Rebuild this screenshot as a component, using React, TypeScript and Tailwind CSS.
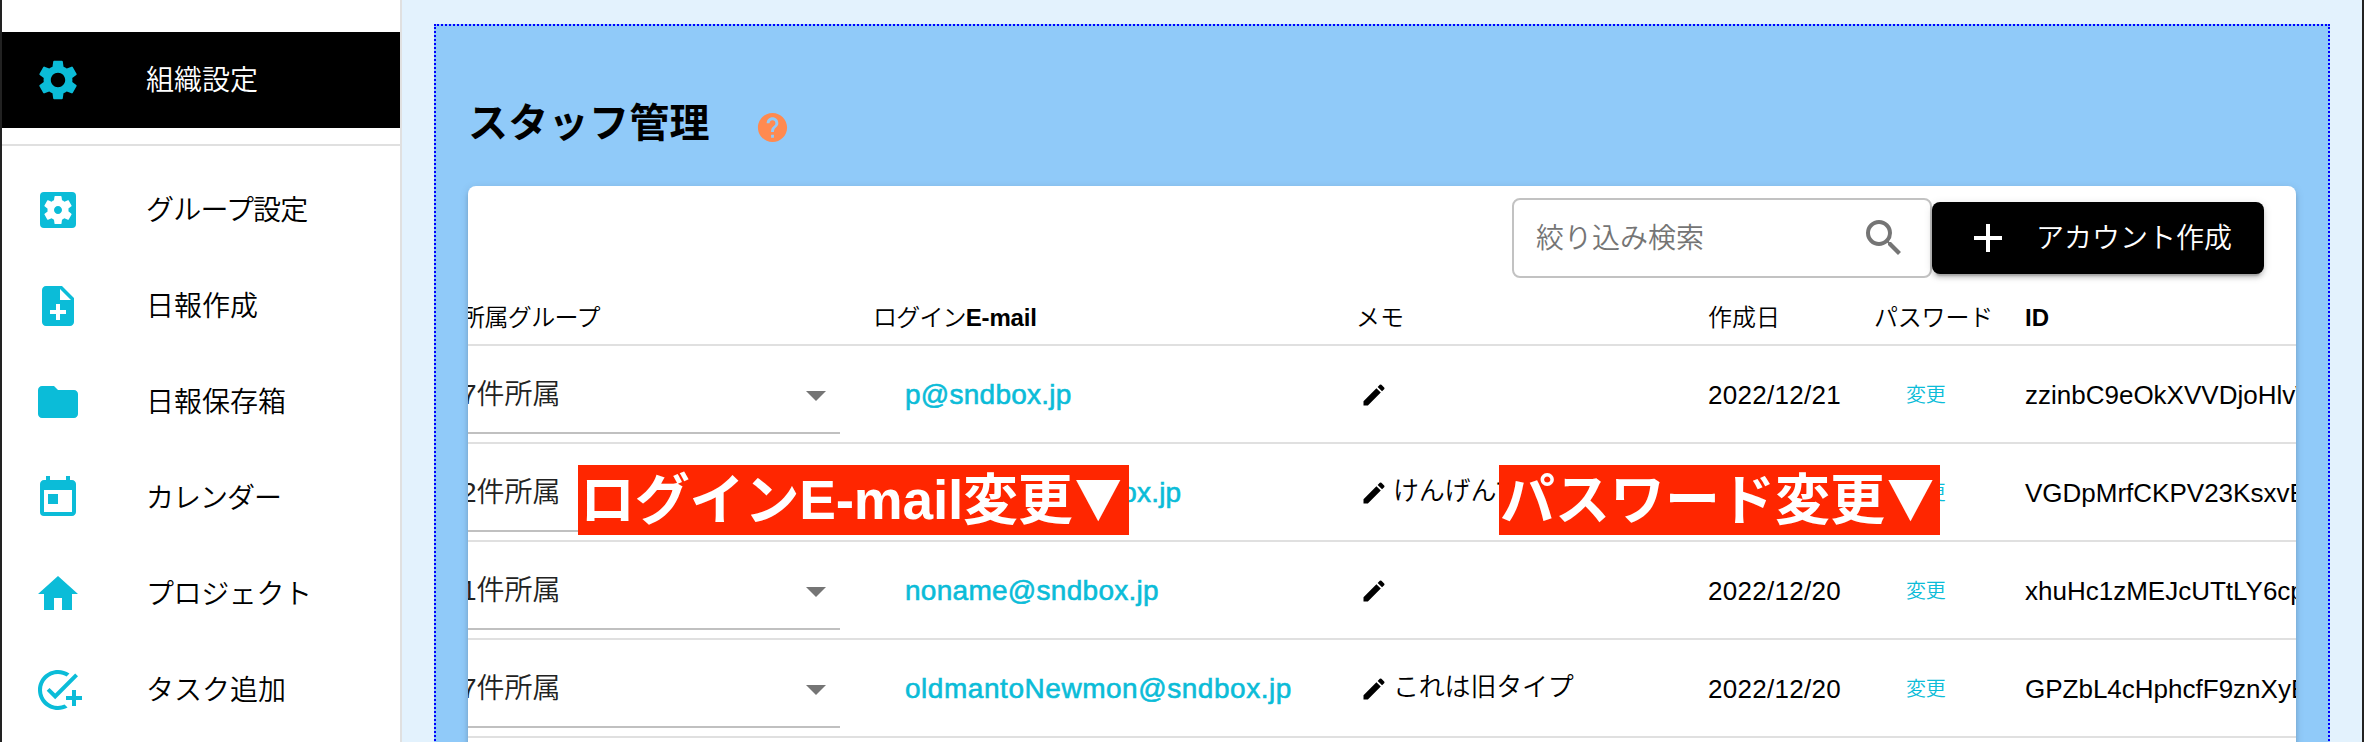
import type { ReactNode } from 'react';
import type { IconType } from 'react-icons';
import {
  MdAdd,
  MdAddTask,
  MdArrowDropDown,
  MdEdit,
  MdFolder,
  MdHelp,
  MdHome,
  MdNoteAdd,
  MdSearch,
  MdSettings,
  MdSettingsApplications,
  MdToday,
} from 'react-icons/md';

const menu: { label: string; icon: IconType; text: string }[] = [
  { label: 'グループ設定', icon: MdSettingsApplications, text: 'tracking-[-0.8px]' },
  { label: '日報作成', icon: MdNoteAdd, text: '' },
  { label: '日報保存箱', icon: MdFolder, text: '' },
  { label: 'カレンダー', icon: MdToday, text: 'tracking-[-1px]' },
  { label: 'プロジェクト', icon: MdHome, text: 'tracking-[-0.4px]' },
  { label: 'タスク追加', icon: MdAddTask, text: '' },
];

const staff = [
  { groups: 7, email: 'p@sndbox.jp', spacing: 'tracking-[0.25px]', memo: '', date: '2022/12/21', id: 'zzinbC9eOkXVVDjoHlvW' },
  { groups: 2, email: 'managers@sndbox.jp', spacing: 'tracking-[0.2px]', memo: 'けんげんてすと', date: '2022/12/20', id: 'VGDpMrfCKPV23KsxvEq' },
  { groups: 1, email: 'noname@sndbox.jp', spacing: 'tracking-[0.28px]', memo: '', date: '2022/12/20', id: 'xhuHc1zMEJcUTtLY6cpa' },
  { groups: 7, email: 'oldmantoNewmon@sndbox.jp', spacing: 'tracking-[0.54px]', memo: 'これは旧タイプ', date: '2022/12/20', id: 'GPZbL4cHphcfF9znXyEa' },
];

const columns = 'grid grid-cols-[412px_483px_352px_166px_151px_400px]';

function Callout({ children, className }: { children: ReactNode; className: string }) {
  return (
    <div
      className={`absolute top-[465px] flex h-[70px] items-center overflow-hidden bg-[#ff2600] text-[55px] leading-none font-bold whitespace-nowrap text-white ${className}`}
    >
      <span>{children}</span>
      <span className="mb-[10px] -ml-[2px] flex w-[55px] shrink-0 scale-y-[1.08] justify-center font-['Noto_Sans_CJK_JP',sans-serif] text-[47px]">
        ▼
      </span>
    </div>
  );
}

function Sidebar() {
  return (
    <nav className="box-content w-[398px] shrink-0 border-r-2 border-[#e0e0e0] bg-white pt-8 text-[28px]">
      <div className="flex h-24 items-center bg-black pl-8 text-white">
        <MdSettings className="size-12 text-[#0bbcd8]" />
        <span className="mt-px ml-16 font-[350]">組織設定</span>
      </div>
      <div className="mt-4 mb-4 h-0.5 bg-[#e0e0e0]" />
      {menu.map(({ label, icon: Icon, text }) => (
        <div key={label} className="flex h-24 items-center pl-8">
          <Icon className="size-12 text-[#0bbcd8]" />
          <span className={`mt-px ml-16 font-[350] whitespace-nowrap ${text}`}>{label}</span>
        </div>
      ))}
    </nav>
  );
}

function Toolbar() {
  return (
    <div className="flex h-[104px] items-start justify-end pt-3 pr-8">
      <div className="flex h-20 w-[420px] items-center justify-between rounded-lg border-2 border-[#c2c2c2] pr-[22px] pl-[22px]">
        <span className="mt-px text-[28px] font-[350] text-[#757575]">絞り込み検索</span>
        <MdSearch className="size-12 text-[#757575]" />
      </div>
      <button className="mt-1 flex h-[72px] w-[332px] items-center rounded-lg bg-black pl-8 text-[28px] text-white shadow-[0_6px_2px_-4px_rgba(0,0,0,0.2),0_4px_4px_rgba(0,0,0,0.14),0_2px_10px_rgba(0,0,0,0.12)]">
        <MdAdd className="size-12" />
        <span className="mt-px ml-6 font-[350] whitespace-nowrap">アカウント作成</span>
      </button>
    </div>
  );
}

function StaffTable() {
  return (
    <div className="-ml-[7px] w-[1964px]">
      <div className={`${columns} h-[56px] items-center border-b-2 border-[#e0e0e0] pt-px text-[24px] font-[350] whitespace-nowrap`}>
        <span className="tracking-[-0.6px]">所属グループ</span>
        <span className="tracking-[-0.8px]">
          ログイン<span className="font-bold tracking-[-0.2px]">E-mail</span>
        </span>
        <span>メモ</span>
        <span>作成日</span>
        <span className="tracking-[-0.2px]">パスワード</span>
        <span className="font-bold">ID</span>
      </div>
      {staff.map((s) => (
        <div key={s.id} className={`${columns} h-[98px] items-center border-b-2 border-[#e0e0e0] text-[26px] whitespace-nowrap`}>
          <div className="mr-[33px] flex h-[88px] items-center justify-between self-start border-b-2 border-[#c0c0c0] pt-[12px] text-[28px] text-[#222]">
            <span className="font-[350]">{s.groups}件所属</span>
            <MdArrowDropDown className="size-12 text-[#757575]" />
          </div>
          <a className={`mt-px pl-8 text-[28px] text-[#0bbcd8] [-webkit-text-stroke:0.6px_#0bbcd8] ${s.spacing}`}>{s.email}</a>
          <div className="flex items-center gap-[5px] pl-1">
            <MdEdit className="mt-[2px] size-7 text-black" />
            <span className="-mt-[2px] font-[350] tracking-[-0.2px]">{s.memo}</span>
          </div>
          <span className="mt-[2px] tracking-[0.3px]">{s.date}</span>
          <a className="mt-px pl-8 text-[20px] font-[350] tracking-[-0.3px] text-[#0bbcd8]">変更</a>
          <span className="mt-[2px]">{s.id}</span>
        </div>
      ))}
    </div>
  );
}

export default function App() {
  return (
    <div className="relative flex h-[742px] w-[2364px] overflow-hidden border-x-2 border-[#222] bg-[#e3f2fd] font-['Liberation_Sans','Noto_Sans_CJK_JP',sans-serif] text-black">
      <Sidebar />
      <main className="flex-1 pt-6 pr-8 pl-8">
        <div className="h-[800px] w-[1896px] border-2 border-dotted border-[#0000ff] bg-[#90caf9] px-8">
          <div className="flex h-[160px] items-center pt-[34px]">
            <h1 className="text-[40px] leading-none font-bold tracking-[0.3px]">スタッフ管理</h1>
            <MdHelp className="mt-[8px] ml-[45px] size-[35px] text-[#ff8a50]" />
          </div>
          <section className="h-[700px] w-[1828px] rounded-lg bg-white shadow-[0_6px_2px_-4px_rgba(0,0,0,0.2),0_4px_4px_rgba(0,0,0,0.14),0_2px_10px_rgba(0,0,0,0.12)]">
            <div className="h-full overflow-hidden rounded-lg">
              <Toolbar />
              <StaffTable />
            </div>
          </section>
        </div>
      </main>
      <Callout className="left-[576px] w-[551px] pl-[2px] tracking-[-0.2px]">ログインE-mail変更</Callout>
      <Callout className="left-[1497px] w-[441px] pl-px">パスワード変更</Callout>
    </div>
  );
}
